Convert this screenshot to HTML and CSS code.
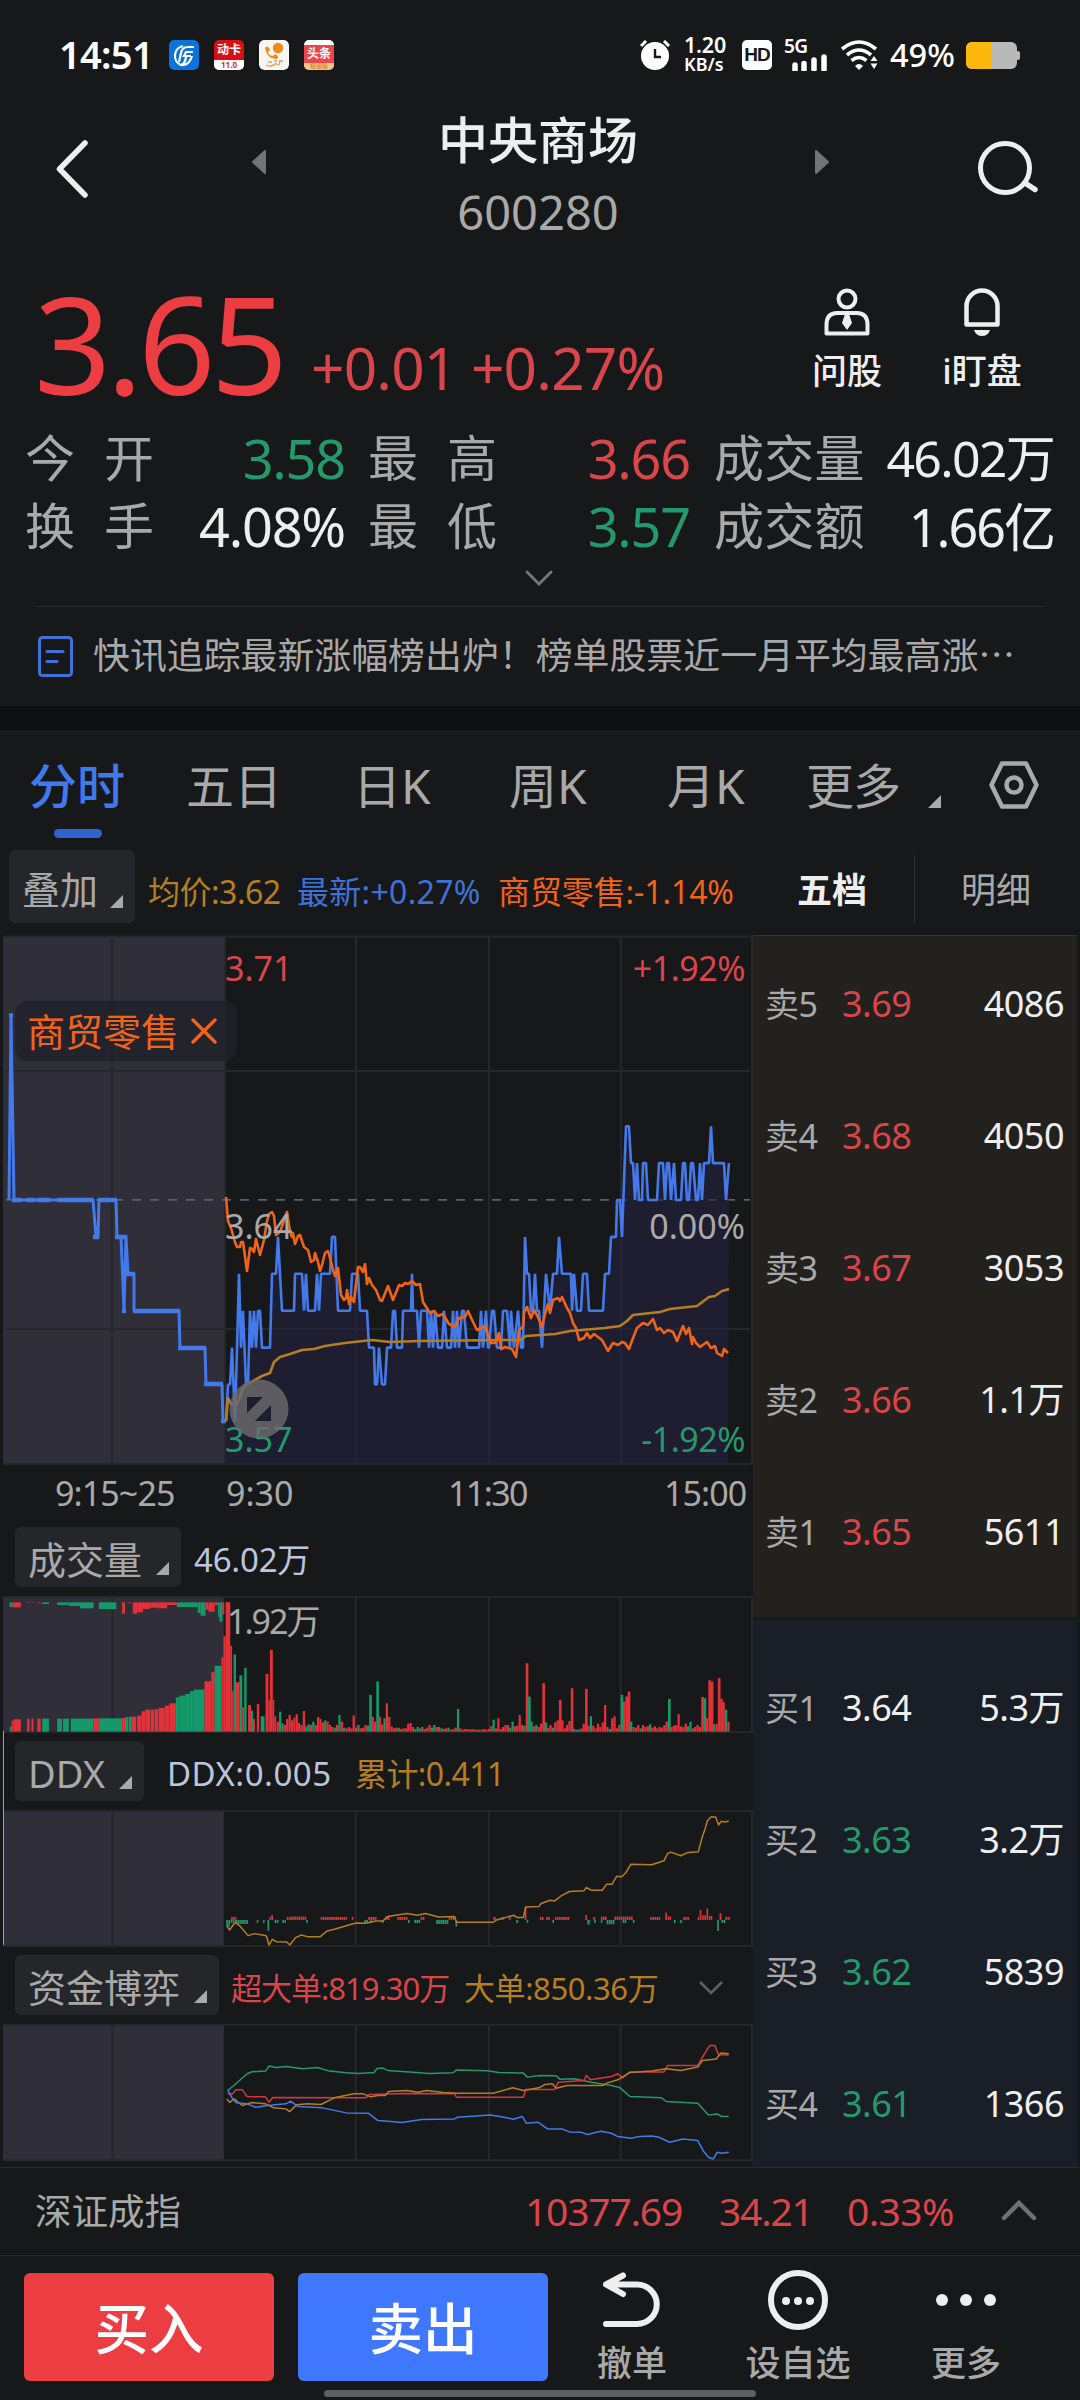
FILE: index.html
```html
<!DOCTYPE html>
<html lang="zh-CN">
<head>
<meta charset="utf-8">
<title>中央商场 600280</title>
<link rel="stylesheet" href="styles.css">
</head>
<body>
<div class="status">
  <span class="clock">14:51</span>
  <svg class="app" viewBox="0 0 30 30"><rect width="30" height="30" rx="5" fill="#0a74dc"/><path d="M14 6a10 10 0 0 0-2 19M25 7h-6q-6 0-7 6l-2 9M24 12h-7l-2 4h7M17 17q-1 7-5 8 8 1 11-9" fill="none" stroke="#fff" stroke-width="2.200"/></svg>
  <span class="app app-red"><b>动卡</b><i>11.0</i></span>
  <svg class="app" viewBox="0 0 30 30"><rect width="30" height="30" rx="5" fill="#f6f6f4"/><circle cx="19" cy="8" r="5.200" fill="#f08a1d"/><path d="M6 8q2-3 4 0l1 2-2 2q1 4 5 4l2-2 3 2q1 2-2 3-9 0-11-11z" fill="#f08a1d"/><path d="M7 25q5 3 9-1M9 22h4M15 21h3M20 21h4M21 21l-1 4M16 23l3 2" stroke="#e89a48" stroke-width="1.300" fill="none"/></svg>
  <span class="app app-news"><b>头条</b><i>极速版</i></span>
  <div class="status-right">
    <svg class="s-alarm" viewBox="0 0 30 30"><circle cx="15" cy="16" r="14" fill="#fff"/><path d="M1 6l5-5M29 6l-5-5" stroke="#fff" stroke-width="3"/><path d="M15 9v8h6" stroke="#171819" stroke-width="2.400" fill="none"/></svg>
    <div class="speed"><span>1.20</span><span>KB/s</span></div>
    <span class="hd">HD</span>
    <div class="signal"><span>5G</span><svg viewBox="0 0 36 17"><path d="M3 16v-5M12 16V9.500M22 15.500V6M32 15.500V3" stroke="#fff" stroke-width="5.500" stroke-linecap="round"/></svg></div>
    <svg class="s-wifi" viewBox="0 0 37 30"><g fill="none" stroke="#fff" stroke-width="3.600"><path d="M1 9q17-14 34 0"/><path d="M6 15q12-10 24 0"/><path d="M10.500 20.500q7.500-6 15 0"/></g><path d="M14 26q4-4 8 0l-4 4zM29.500 21l3.500-5 3.500 5zM29.500 23.500h7L33 29z" fill="#fff"/></svg>
    <span class="pct">49%</span>
    <svg class="s-bat" viewBox="0 0 54 27"><rect width="51" height="27" rx="6" fill="#b9b9b9"/><rect x="50" y="9" width="4" height="9" rx="2" fill="#b9b9b9"/><path d="M6 0h19.500v27H6a6 6 0 0 1-6-6V6a6 6 0 0 1 6-6z" fill="#fdb90b"/></svg>
  </div>
</div>

<header class="head">
  <svg class="back" viewBox="0 0 32 58"><path d="M29 3L3.500 29 29 55" fill="none" stroke="#eee" stroke-width="5.500" stroke-linecap="round" stroke-linejoin="round"/></svg>
  <svg class="prev" viewBox="0 0 14 24"><path d="M13 1v22L1 12z" fill="#737373" stroke="#737373" stroke-linejoin="round" stroke-width="2"/></svg>
  <div class="title"><h1>中央商场</h1><span>600280</span></div>
  <svg class="next" viewBox="0 0 14 24"><path d="M1 1v22l12-11z" fill="#737373" stroke="#737373" stroke-linejoin="round" stroke-width="2"/></svg>
  <svg class="search" viewBox="0 0 60 56"><circle cx="27" cy="28" r="24.500" fill="none" stroke="#eee" stroke-width="5"/><path d="M47 43l10 6.500" stroke="#eee" stroke-width="5.500" stroke-linecap="round"/></svg>
</header>

<section class="price">
  <span class="last">3.65</span>
  <span class="chg">+0.01 +0.27%</span>
  <div class="act act-ask"><svg width="46" height="48" viewBox="0 0 46 48"><g fill="none" stroke="#eee" stroke-width="4"><circle cx="23" cy="11" r="8.500"/><path d="M2.500 45.500V37Q2.500 25 13 25h20q10.500 0 10.500 12v8.500z" stroke-linejoin="round"/></g><path d="M21 26h4l3 9-5 7-5-7z" fill="#eee"/></svg><span>问股</span></div>
  <div class="act act-bell"><svg width="36" height="48" viewBox="0 0 36 48"><path d="M2.500 36.500V18a15.500 15.500 0 0 1 31 0v18.500z" fill="none" stroke="#eee" stroke-width="4.500" stroke-linejoin="round"/><path d="M10 42h16q-2 6-8 6t-8-6z" fill="#eee"/></svg><span>i盯盘</span></div>
</section>

<section class="quote">
  <span class="lab wide">今开</span><span class="val green">3.58</span><span class="lab wide">最高</span><span class="val red">3.66</span><span class="lab">成交量</span><span class="val small">46.02万</span>
  <span class="lab wide">换手</span><span class="val">4.08%</span><span class="lab wide">最低</span><span class="val green">3.57</span><span class="lab">成交额</span><span class="val mid">1.66亿</span>
</section>
<svg class="expand" viewBox="0 0 28 17"><path d="M2 2l12 12L26 2" fill="none" stroke="#777" stroke-width="2.800" stroke-linecap="round"/></svg>
<div class="news"><svg width="35" height="41" viewBox="0 0 35 41"><rect x="1.500" y="1.500" width="32" height="38" rx="3" fill="none" stroke="#4170d8" stroke-width="3"/><path d="M9 15.500h16M9 25.500h10" stroke="#4170d8" stroke-width="3" stroke-linecap="round"/></svg><span>快讯追踪最新涨幅榜出炉！榜单股票近一月平均最高涨⋯</span></div>

<nav class="tabs">
  <span class="on">分时</span><span>五日</span><span>日K</span><span>周K</span><span>月K</span><span>更多</span><i class="tri"></i>
  <svg class="gear" viewBox="0 0 50 48"><path d="M13 2.500h24L47.500 24 37 45.500H13L2.500 24z" fill="none" stroke="#a9a9a9" stroke-width="4.500" stroke-linejoin="round"/><circle cx="25" cy="24" r="7.500" fill="none" stroke="#a9a9a9" stroke-width="4.500"/></svg>
</nav>

<main class="main">
  <div class="left">
    <div class="legend"><span class="pill">叠加<i class="tri"></i></span><span class="gold l1">均价:3.62</span><span class="blue l2">最新:+0.27%</span><span class="orange l3">商贸零售:-1.14%</span></div>
    <div class="chart main-chart">
      <svg id="price" viewBox="0 935 753 530"></svg>
      <span class="mk tl red">3.71</span><span class="mk tr red">+1.92%</span>
      <span class="mk ml">3.64</span><span class="mk mr">0.00%</span>
      <span class="mk bl green">3.57</span><span class="mk br green">-1.92%</span>
      <div class="tag">商贸零售<svg width="26" height="26" viewBox="0 0 26 26"><path d="M2 2l22 22M24 2L2 24" stroke="#f0641a" stroke-width="3.400" stroke-linecap="round"/></svg></div>
      <svg class="zoom" viewBox="0 0 60 60"><circle cx="30" cy="30" r="29.500" fill="#6a6a6c" fill-opacity=".82"/><path d="M18 18h16L18 34zM42 26v16H26z" fill="#1d1d2d"/></svg>
    </div>
    <div class="axis"><span class="a1">9:15~25</span><span class="a2">9:30</span><span class="a3">11:30</span><span class="a4">15:00</span></div>
    <div class="bar"><span class="pill">成交量<i class="tri"></i></span><span class="pale v1">46.02万</span></div>
    <div class="chart sub"><svg id="volume" viewBox="0 377 1554 410" preserveAspectRatio="none"></svg><span class="mk vol">1.92万</span></div>
    <div class="focus">
      <div class="bar"><span class="pill">DDX<i class="tri"></i></span><span class="pale d1">DDX:0.005</span><span class="gold d2">累计:0.411</span></div>
      <div class="chart sub"><svg id="ddx" viewBox="0 28 1554 410" preserveAspectRatio="none"></svg></div>
    </div>
    <div class="bar"><span class="pill">资金博弈<i class="tri"></i></span><span class="red f1">超大单:819.30万</span><span class="gold f2">大单:850.36万</span><svg class="more" width="26" height="16" viewBox="0 0 26 16"><path d="M2 2l11 11L24 2" fill="none" stroke="#5d5f6d" stroke-width="2.600"/></svg></div>
    <div class="chart sub"><svg id="funds" viewBox="0 671 1554 410" preserveAspectRatio="none"></svg></div>
  </div>
  <aside class="book">
    <div class="book-tabs"><b>五档</b><span>明细</span></div>
    <div class="sell">
      <div><span>卖5</span><span class="red">3.69</span><span>4086</span></div>
      <div><span>卖4</span><span class="red">3.68</span><span>4050</span></div>
      <div><span>卖3</span><span class="red">3.67</span><span>3053</span></div>
      <div><span>卖2</span><span class="red">3.66</span><span>1.1万</span></div>
      <div><span>卖1</span><span class="red">3.65</span><span>5611</span></div>
    </div>
    <div class="buy">
      <div><span>买1</span><span class="white">3.64</span><span>5.3万</span></div>
      <div><span>买2</span><span class="green">3.63</span><span>3.2万</span></div>
      <div><span>买3</span><span class="green">3.62</span><span>5839</span></div>
      <div><span>买4</span><span class="green">3.61</span><span>1366</span></div>
    </div>
  </aside>
</main>

<div class="index"><span class="name">深证成指</span><span class="n1">10377.69</span><span class="n2">34.21</span><span class="n3">0.33%</span><svg width="36" height="21" viewBox="0 0 36 21"><path d="M3 18L18 3l15 15" fill="none" stroke="#707070" stroke-width="4.500" stroke-linecap="round"/></svg></div>

<footer class="foot">
  <span class="btn b-buy">买入</span><span class="btn b-sell">卖出</span>
  <div class="tool t1"><svg width="58" height="62" viewBox="0 0 58 62"><path d="M20 6.500L3 15.500l17 9.500M4 15.500h30a19.500 19.500 0 0 1 0 39.500H3" fill="none" stroke="#eee" stroke-width="6" stroke-linecap="round" stroke-linejoin="round"/></svg><span>撤单</span></div>
  <div class="tool t2"><svg width="60" height="62" viewBox="0 0 60 62"><circle cx="30" cy="31" r="27" fill="none" stroke="#eee" stroke-width="6"/><g fill="#eee"><circle cx="18" cy="32" r="4"/><circle cx="30" cy="32" r="4"/><circle cx="42" cy="32" r="4"/></g></svg><span>设自选</span></div>
  <div class="tool t3"><svg width="60" height="62" viewBox="0 0 60 62"><g fill="#eee"><circle cx="6" cy="31" r="6"/><circle cx="30" cy="31" r="6"/><circle cx="54" cy="31" r="6"/></g></svg><span>更多</span></div>
  <i class="home"></i>
</footer>
<script src="charts.js"></script>
</body>
</html>
```
FILE: styles.css
```css
* { box-sizing: border-box; }
body { margin: 0; width: 1080px; height: 2400px; overflow: hidden; background: #171819; color: #eee; font-family: "Noto Sans", "Noto Sans CJK SC", sans-serif; display: flex; flex-direction: column; line-height: 1; white-space: nowrap; }
svg { display: block; flex: none; }
i { font-style: normal; }
.red { color: #d8464b; }
.green { color: #24996c; }
.blue { color: #3f71d6; }
.gold { color: #b57e22; }
.orange { color: #f0641a; }
.pale { color: #bcc5dc; }
.white { color: #eee; }
.tri { width: 13px; height: 13px; background: #a9a9a9; clip-path: polygon(100% 0, 100% 100%, 0 100%); }

.status { height: 110px; padding: 0 60px 0 59px; display: flex; align-items: center; color: #fff; flex: none; }
.clock { font-size: 38px; font-weight: 600; letter-spacing: -.7px; width: 110px; line-height: 34px; margin-top: -2px; }
.app { width: 30px; height: 30px; margin-right: 15px; border-radius: 5px; overflow: hidden; flex: none; display: flex; flex-direction: column; align-items: center; }
.app b { font-size: 12px; line-height: 20px; color: #fff; }
.app i { font-size: 8px; line-height: 10px; width: 100%; text-align: center; }
.app-red { background: #d80f12; }
.app-red i { background: #fff; color: #d8302a; font-weight: 700; }
.app-news { background: linear-gradient(#fff 0 5px, #e8474d 5px); }
.app-news b { line-height: 24px; height: 23px; padding-top: 2px; }
.app-news i { background: #f4c58b; color: #d8702a; font-size: 6px; line-height: 7px; }
.status-right { margin-left: auto; display: flex; align-items: center; }
.s-alarm { width: 30px; height: 30px; margin-right: 14px; }
.speed { display: flex; flex-direction: column; width: 58px; font-weight: 600; font-size: 21.500px; line-height: 17px; letter-spacing: -.2px; margin-top: -2px; }
.speed span + span { font-size: 18px; letter-spacing: 0; margin-top: 3px; }
.hd { width: 30px; height: 30px; border-radius: 5px; background: #fff; color: #171819; font: 700 19px/30px "Liberation Sans", sans-serif; text-align: center; letter-spacing: -1px; margin-right: 12px; }
.signal { width: 45px; height: 32px; margin-right: 12px; display: flex; flex-direction: column; }
.signal span { font-size: 19px; line-height: 15px; font-weight: 600; letter-spacing: -.5px; }
.signal svg { width: 36px; height: 17px; margin-left: 8px; }
.s-wifi { width: 37px; height: 30px; margin-right: 12px; }
.pct { font-size: 32.500px; font-weight: 500; width: 76px; letter-spacing: 0; }
.s-bat { width: 54px; height: 27px; }

.head { height: 150px; display: grid; grid-template-columns: 56px 196px 178px 216px 169px 163px 102px; flex: none; }
.head > * { grid-row: 1; }
.back { grid-column: 2; width: 32px; height: 58px; margin-top: 30px; }
.prev { grid-column: 3; width: 14px; height: 24px; margin-top: 40px; }
.title { grid-column: 4; text-align: center; display: flex; flex-direction: column; align-items: center; padding-top: 4px; }
.title h1 { margin: 0; font-size: 50px; font-weight: 500; line-height: 52px; }
.title span { font-size: 47px; line-height: 50px; margin-top: 21px; color: #a9a9a9; }
.next { grid-column: 6; width: 14px; height: 24px; margin: 40px 0 0; }
.search { grid-column: 7; width: 60px; height: 56px; margin: 30px 0 0; }

.price { height: 166px; padding-left: 34px; display: flex; flex: none; }
.last { font-size: 135px; line-height: 136px; letter-spacing: -4.600px; width: 277px; margin-top: 15px; color: #eb3d42; }
.chg { font-size: 58.500px; line-height: 60px; letter-spacing: -.8px; margin-top: 77px; width: 481px; color: #d8464b; }
.act { display: flex; flex-direction: column; align-items: center; padding-top: 28px; font-size: 35px; width: 110px; }
.act span { margin-top: 17px; line-height: 36px; font-weight: 500; }
.act-bell { margin-left: 25px; }

.quote { height: 136px; padding-left: 25px; display: grid; grid-template-columns: 130px 190px 130px 215px 154px 210px; grid-auto-rows: 68px; column-gap: 0; flex: none; }
.quote > * { line-height: 65px; height: 68px; }
.lab { font-size: 50px; color: #a9a9a9; }
.lab.wide { letter-spacing: 29px; }
.lab:nth-child(6n+3) { margin-left: 23px; }
.lab:nth-child(6n+5) { margin-left: 24px; letter-spacing: .3px; }
.val { font-size: 54px; letter-spacing: -1.200px; text-align: right; }
.val:nth-child(6n) { justify-self: end; margin-right: -27px; width: 210px; }
.val:nth-child(12n+6), .val:nth-child(12n) { margin-right: 0; }
.val.small { font-size: 50px; letter-spacing: -1.700px; }
.val.mid { font-size: 52px; letter-spacing: -2px; }
.expand { width: 28px; height: 17px; margin: 8px auto 19px 525px; }
.news { height: 100px; margin: 0 35px; padding-left: 3px; border-top: 1px solid #2a2b2d; display: flex; align-items: center; gap: 20px; font-size: 36.900px; color: #a9a9a9; flex: none; }
.news span { margin-top: -3px; }

.tabs { height: 144px; border-top: 24px solid #0f1012; padding-left: 29px; display: flex; flex: none; font-size: 48px; color: #a9a9a9; line-height: 112px; }
.tabs > span { flex: none; }
.tabs .on { width: 157px; color: #4078ee; font-weight: 500; position: relative; }
.tabs .on::after { content: ""; position: absolute; left: 25px; top: 99px; width: 48px; height: 9px; border-radius: 5px; background: #2f63cf; }
.tabs span:nth-child(2) { width: 167px; }
.tabs span:nth-child(3) { width: 156px; }
.tabs span:nth-child(4) { width: 158px; }
.tabs span:nth-child(5) { width: 139px; }
.tabs span:nth-child(6) { width: 122px; letter-spacing: -1px; }
.tabs .tri { margin-top: 65px; }
.gear { width: 50px; height: 48px; margin: 31px 0 0 48px; }

.main { display: grid; grid-template-columns: 753px 324px; flex: none; height: 1317px; }
.left { display: flex; flex-direction: column; }
.legend { height: 85px; display: grid; grid-template-columns: 9px 139px 149px 201px 1fr; font-size: 32px; line-height: 74px; flex: none; }
.legend > span:not(.pill) { letter-spacing: -.5px; }
.pill { display: flex; align-items: flex-end; background: #25262a; border-radius: 6px; color: #a9a9a9; font-size: 38px; line-height: 58px; width: max-content; height: 60px; padding: 0 12px 0 13px; }
.pill .tri { margin: 0 0 12px 14px; }
.legend .pill { grid-column: 2; height: 73px; line-height: 67px; width: 126px; }
.legend .pill .tri { margin: 0 0 15px 12px; }
.legend .l1, .legend .l2, .legend .l3 { padding-top: 5px; }
.legend > span.l2 { letter-spacing: .3px; }
.legend > span.l3 { letter-spacing: -.1px; }
.chart { position: relative; flex: none; }
.main-chart { height: 530px; }
.main-chart > svg:first-child { width: 753px; height: 530px; }
.mk { position: absolute; font-size: 34px; line-height: 34px; letter-spacing: 0; }
.ml, .mr, .vol { color: #a9a9a9; }
.tl, .ml, .bl { left: 225px; }
.tr, .mr, .br { right: 8px; }
.tl, .tr { top: 16px; }
.ml, .mr { top: 274px; }
.bl, .br { top: 487px; }
.tr, .br { letter-spacing: -.5px; }
.tag { position: absolute; left: 15px; top: 66px; width: 222px; height: 60px; padding-left: 12px; display: flex; align-items: center; gap: 12px; background: #20212acc; border-radius: 12px; color: #f0641a; font-size: 38px; line-height: 54px; }
.zoom { position: absolute; left: 229px; top: 444px; width: 60px; height: 60px; }
.axis { height: 62px; display: grid; grid-template-columns: 55px 171px 222px 216px 1fr; font-size: 34px; line-height: 56px; color: #a9a9a9; flex: none; }
.a1 { grid-column: 2; letter-spacing: -.9px; }
.a3 { letter-spacing: -1.600px; }
.a4 { letter-spacing: -.9px; }
.bar { height: 69px; padding-left: 15px; display: flex; font-size: 33px; line-height: 66px; flex: none; }
.bar .pill { line-height: 56px; }
.sub { height: 137px; }
.sub > svg { width: 753px; height: 137px; }
.vol { left: 227px; top: 8px; letter-spacing: -2px; }
.v1 { margin-left: 13px; letter-spacing: -.2px; }
.d1 { margin-left: 23px; width: 188px; letter-spacing: .5px; }
.d2 { font-size: 32px; letter-spacing: -.6px; }
.f1 { margin-left: 12px; width: 233px; font-size: 31px; letter-spacing: -1px; }
.f2 { width: 234px; font-size: 31px; letter-spacing: -.4px; }
.more { margin-top: 25px; }
.focus { position: relative; height: 206px; margin: 8px 0; flex: none; }
.focus::before { content: ""; position: absolute; left: 3px; top: -10px; width: 1px; height: 214px; background: #9a9eb2; z-index: 1; }

.book { display: flex; flex-direction: column; }
.book-tabs { height: 86px; display: flex; font-size: 35px; flex: none; line-height: 80px; border-bottom: 1px solid #333436; }
.book-tabs b { width: 162px; padding-left: 44px; font-weight: 600; height: 68px; margin-top: 5px; border-right: 1px solid #333436; line-height: 70px; }
.book-tabs span { padding-left: 46px; color: #a9a9a9; }
.sell, .buy { font-size: 36px; }
.sell { height: 681px; background: #23211d; padding-top: 2px; margin-bottom: 3px; flex: none; }
.buy { height: 547px; background: #1a1e27; padding-top: 22px; flex: none; }
.sell div, .buy div { height: 132px; display: grid; grid-template-columns: 77px 100px 1fr; padding: 0 13px 0 12px; line-height: 132px; }
.sell span, .buy span { letter-spacing: -.5px; height: 132px; }
.sell span:first-child, .buy span:first-child { font-size: 34px; color: #a9a9a9; }
.sell span:last-child, .buy span:last-child { text-align: right; }

.index { height: 89px; border-top: 1px solid #2a2b2d; border-bottom: 1px solid #2a2b2d; padding-left: 35px; display: flex; align-items: center; color: #d8464b; font-size: 39px; line-height: 80px; flex: none; }
.index span { margin-top: -1px; letter-spacing: -1.200px; }
.index .name { width: 490px; font-size: 36.500px; letter-spacing: 0; color: #a9a9a9; }
.n1 { width: 194px; }
.n2 { width: 128px; }
.n3 { width: 154px; }
.index .n3 { letter-spacing: -.6px; }
.index svg { margin-top: -3px; }

.foot { height: 144px; padding: 17px 0 0 24px; display: flex; position: relative; flex: none; }
.btn { width: 250px; height: 108px; border-radius: 6px; margin-right: 24px; color: #fff; font-size: 54.500px; font-weight: 500; line-height: 110px; text-align: center; }
.b-buy { background: #eb3d42; }
.b-sell { background: #3f77ff; margin-right: 0; }
.tool { display: flex; flex-direction: column; align-items: center; width: 120px; font-size: 35px; line-height: 40px; color: #a9a9a9; margin-top: -4px; font-weight: 500; }
.tool span { margin-top: 12px; }
.t1 { margin-left: 24px; }
.t2 { margin-left: 46px; }
.t3 { margin-left: 48px; }
.home { position: absolute; left: 324px; top: 134px; width: 432px; height: 7px; border-radius: 4px; background: #5f5f61; }
```
FILE: charts.js
```js
const NS = 'http://www.w3.org/2000/svg';
const RED = '#e03238', GREEN = '#16996a', GOLD = '#b57e22';

function add(svg, tag, attrs) {
  const el = document.createElementNS(NS, tag);
  for (const k in attrs) el.setAttribute(k, attrs[k]);
  svg.appendChild(el);
  return el;
}
function line(svg, points, stroke, width, extra) {
  add(svg, 'polyline', Object.assign({ points, stroke, 'stroke-width': width, fill: 'none', 'vector-effect': 'non-scaling-stroke', 'stroke-linejoin': 'round' }, extra));
}

/* price chart: each tick level is 0.01 yuan, 36.9 units apart */
const price = document.getElementById('price');
const level = n => 1200 + 36.9 * n;
const toPoints = s => s.split(' ').map(p => { const [x, n] = p.split(':'); return x + ',' + level(+n); }).join(' ');

const pre = '9:0 11:-5 14:0 93:0 96:1 98:1 99:0 116:0 117:1 121:1 124:3 126:1 128:2 134:2 134:3 179:3 180:4 205:4 206:5 222:5 223:6 226:6';
const ticks = '226:6 228:5 230:5 232:4 235:6 239:2 241:4 243:3 246:5 248:5 250:3 252:4 254:3 256:4 258:3 260:3 262:4 270:4 272:2 276:2 278:1 282:3 294:3 295:2 302:2 304:3 306:2 308:3 315:3 317:2 319:3 321:2 330:2 332:1 335:1 338:3 350:3 352:2 358:2 360:3 367:3 369:4 374:4 375:5 377:5 379:4 382:5 385:5 387:4 391:4 393:3 395:3 397:4 402:4 403:3 411:3 412:2 413:3 417:3 419:4 421:3 427:3 429:4 431:3 433:4 435:3 438:4 442:4 444:3 447:4 451:4 453:3 455:4 457:3 459:4 462:3 464:3 467:4 479:4 481:3 483:4 486:3 488:4 489:4 492:3 494:3 497:4 501:4 503:3 507:3 510:4 511:3 514:4 518:3 521:4 523:4 525:1 527:2 529:2 531:3 533:3 535:2 537:3 539:3 542:4 546:2 550:3 553:2 557:2 559:1 562:2 571:2 572:3 574:2 577:3 581:3 583:2 587:2 589:3 603:3 605:2 609:2 611:1 616:1 617:0 620:0 622:1 626:-2 629:-2 631:-1 633:-1 635:0 637:-1 639:0 642:0 643:-1 646:-1 648:0 657:0 659:-1 663:-1 665:0 667:-1 669:-1 671:0 674:-1 676:0 681:0 683:-1 685:-1 687:0 689:0 691:-1 693:-1 696:0 698:0 700:-1 702:0 704:-1 709:-1 711:-2 713:-1 724:-1 726:0 729:-1';
const sector = '226,1197 228,1221 231,1228 235,1242 237,1247 240,1247 241,1242 243,1242 247,1271 250,1248 252,1249 254,1252 256,1239 260,1255 264,1240 267,1221 269,1214 272,1212 274,1216 276,1235 280,1232 287,1212 290,1232 292,1237 293,1233 295,1244 298,1236 300,1235 304,1247 308,1250 311,1262 314,1260 315,1253 318,1262 320,1271 322,1265 325,1253 328,1251 330,1258 333,1270 335,1276 338,1268 341,1295 344,1300 346,1298 347,1290 349,1304 351,1297 354,1302 358,1267 360,1267 363,1272 365,1264 367,1284 369,1278 372,1285 376,1290 380,1300 382,1301 388,1286 393,1300 399,1285 402,1286 405,1283 408,1284 412,1281 416,1285 420,1284 423,1302 430,1313 434,1311 438,1316 443,1314 449,1324 455,1327 459,1318 465,1317 468,1311 473,1322 477,1330 485,1326 491,1343 495,1343 499,1333 501,1349 505,1347 512,1349 516,1357 519,1330 523,1327 524,1313 527,1307 531,1318 534,1310 538,1317 542,1327 545,1314 548,1304 550,1313 553,1300 558,1298 560,1301 562,1297 567,1308 570,1313 573,1323 576,1328 579,1340 584,1338 587,1333 590,1338 594,1334 602,1340 608,1351 613,1343 618,1345 622,1342 625,1343 629,1349 633,1338 637,1328 643,1323 648,1325 653,1319 657,1330 660,1328 664,1333 668,1330 673,1332 677,1341 683,1326 686,1334 689,1328 692,1344 693,1337 696,1343 700,1347 707,1342 711,1348 715,1346 717,1353 722,1356 724,1349 728,1353';
const average = '226,1421 228,1398 231,1404 236,1405 239,1400 243,1388 246,1385 262,1376 270,1373 274,1362 280,1357 290,1354 302,1350 314,1349 325,1346 345,1343 372,1340 390,1342 420,1341 500,1340 520,1340 526,1336 555,1334 570,1331 605,1328 620,1326 627,1321 633,1315 660,1312 670,1309 697,1306 709,1297 715,1296 722,1291 729,1289';

add(price, 'rect', { x: 3, y: 936, width: 222, height: 528, fill: '#2f2e39' });
add(price, 'path', { d: 'M3 936.500H751M3 1464H751M6 1071H750M6 1329H750M112 936V1464M225 936V1464M356 936V1464M489 936V1464M621 936V1464M752 936V1464', stroke: '#26272a', 'stroke-width': 2, fill: 'none' });
add(price, 'path', { d: 'M6 1199.800H750', stroke: '#5b606b', 'stroke-width': 1.8, 'stroke-dasharray': '9 9' });
add(price, 'polygon', { points: toPoints(ticks) + ' 728,1463 226,1463', fill: '#23223f', 'fill-opacity': .62 });
line(price, toPoints(pre), '#4479ea', 3);
add(price, 'path', { d: 'M9 1015.500h4M12 1200h10M26 1200h9M37 1200h13M57 1200h36M98 1200h19M93 1237h6M115 1237h12M122 1311h4M126 1274h9M133 1311h47M178 1348h28M204 1384h19M221 1421h5', stroke: '#4479ea', 'stroke-width': 4.5 });
line(price, toPoints(ticks), '#4479ea', 2.6, { 'stroke-linejoin': 'bevel' });
line(price, average, GOLD, 2.6);
line(price, sector, '#f0641a', 2.6);

/* shared frame of the indicator charts */
function frame(svg, top) {
  add(svg, 'rect', { x: 6, y: top, width: 456, height: 410, fill: '#2f2e39' });
  add(svg, 'path', { d: `M6 ${top + 2}H1552M6 ${top + 408}H1552M232 ${top}v410M734 ${top}v410M1009 ${top}v410M1281 ${top}v410M1552 ${top}v410`, stroke: '#26272a', 'stroke-width': 2, fill: 'none', 'vector-effect': 'non-scaling-stroke' });
}

/* volume */
const volume = document.getElementById('volume');
frame(volume, 377);
const vbar = (x0, x1, y0, y1, c) => add(volume, 'rect', { x: x0, y: y0, width: x1 - x0, height: y1 - y0, fill: c === 'r' ? RED : GREEN });
'20 24 768 g,24 28 750 r,28 43 746 r,56 61 744 r,65 69 744 r,77 84 744 r,87 101 744 g,118 128 744 g,130 142 744 g,146 193 744 g,193 204 743 r,204 252 743 g,252 258 742 r,258 265 740 g,266 272 738 g,272 281 738 r,283 292 735 r,292 300 722 r,300 310 717 r,311 318 717 r,319 326 716 r,327 340 712 r,340 350 705 r,350 363 698 r,363 370 680 g,370 382 675 g,382 392 670 g,392 400 662 g,400 422 657 g,422 436 632 r,436 443 605 r,443 457 586 g,457 461 560 r,461 466 497 r,466 475 396 r,475 479 526 r,479 482 660 r,482 487 552 g,487 494 635 r,494 500 615 g,500 504 710 r,504 509 592 g,512 518 703 r,518 522 720 g,522 526 745 r,530 535 700 r,538 546 737 g,548 554 610 r,554 557 688 r,557 563 538 r,563 566 687 r,566 570 737 r'.split(',').forEach(b => { const [a, z, t, c] = b.split(' '); vbar(+a, +z, +t, 783, c); });
'20 26 410 g,26 43 411 r,56 61 398 r,65 69 398 r,77 84 398 r,87 101 401 g,118 142 404 g,142 165 407 g,165 193 414 g,204 240 416 g,252 258 430 r,263 270 398 r,274 283 430 r,283 295 426 r,295 310 416 r,310 326 412 r,326 345 414 r,345 365 404 r,365 408 410 g,408 414 428 g,414 424 436 g,424 430 418 r,430 443 424 r,443 450 405 r,450 453 440 g,453 459 454 g,459 463 432 r,466 475 500 r'.split(',').forEach(b => { const [a, z, t, c] = b.split(' '); vbar(+a, +z, 396, +t, c); });
/* one bar per minute: its height, g = falling */
const minutes = '30r 60g 25g 20r 38r 50r 34r 42r 52r 26r 20r 62r 16g 22g 20r 30g 20r 44r 38r 28r 34g 30r 20r 14r 12g 20r 50g 30r 12g 10r 14r 10r 48r 12r 20g 10r 12r 20r 18g 110g 44r 30r 150g 45r 22r 40g 85r 44r 16r 10r 12r 12g 8r 10r 10r 24r 26r 14r 8g 14g 10r 14g 8r 12r 20r 12g 20g 14r 14r 10g 8r 10r 12g 6r 8r 12r 68g 10r 6r 8r 8r 6r 8r 6g 6r 6r 6r 8r 6r 8r 16r 36g 10r 40r 8r 14r 20r 20r 12g 30g 16r 18r 50r 20r 18g 205r 105g 30g 16r 20g 14r 24r 145r 28g 12r 20r 12g 28r 34r 95r 34r 10r 20r 32r 130r 8g 6g 6g 10r 24r 128r 18r 46g 18r 10r 24r 14r 28r 80r 14r 8g 40r 46r 10r 20r 110g 90r 105r 120r 30g 14r 12r 20r 10g 20r 14r 16r 22g 12r 16r 10r 14r 12r 20r 30r 98g 14r 18r 20r 52r 16r 14r 24r 16g 30g 10r 14r 20r 14r 104r 100g 40r 154r 150r 22g 24r 160r 98r 88r 66g 30r';
minutes.split(' ').forEach((m, i, all) => {
  const x = 571 + i * (930 / (all.length - 1));
  const h = parseInt(m, 10);
  vbar(x, x + (h > 90 ? 5.5 : 4.6), 783 - h, 783, m.slice(-1));
});

/* DDX */
const ddx = document.getElementById('ddx');
frame(ddx, 28);
const dbars = (list, color, up) => list.split(' ').forEach(s => {
  const [a, z, h = 9] = s.split('-').map(Number);
  for (let x = a; x < z; x += 4.3) add(ddx, 'rect', { x, y: up ? 357 - h : 357, width: Math.min(3.4, z - x), height: h, fill: color });
});
dbars('477-488 556-559 560-564-15 592-598 599-632-10 662-716 726-729 760-778 795-805-10 820-842 868-877 926-940-11 1018-1024 1035-1040 1050-1055 1083-1087-39 1114-1122 1127-1135 1145-1176 1208-1212-15 1224-1229 1240-1252-10 1268-1306-10 1342-1363 1373-1377-22 1378-1385-11 1410-1423 1440-1443 1444-1448-30 1449-1457-14 1458-1462-34 1463-1470-12 1485-1490-20 1497-1507', '#d8363c', true);
dbars('467-475-20 476-487 487-512-12 530-533 543-546 552-556-32 567-575 583-590 632-636 752-760 764-767 788-792 842-846 855-868 900-926-12 940-944-20 1065-1070 1087-1090 1140-1144 1212-1218-14 1226-1230 1240-1243 1252-1268-13 1285-1293 1306-1310 1391-1395 1403-1408 1480-1484-33 1489-1497', '#1f9c6c', false);
line(ddx, '468,375 474,387 482,370 487,365 497,378 512,404 525,398 545,403 550,405 555,432 562,415 570,422 592,423 598,432 610,410 622,402 634,407 661,407 675,390 690,385 725,370 735,366 755,367 775,360 790,360 800,347 840,338 862,343 878,338 905,348 938,347 942,364 1017,364 1025,357 1060,343 1068,350 1080,350 1085,318 1112,317 1117,308 1135,298 1145,300 1157,286 1175,272 1205,270 1210,260 1220,268 1243,268 1252,250 1263,250 1273,226 1283,228 1292,215 1302,190 1345,192 1370,180 1378,158 1385,154 1405,165 1420,155 1441,153 1448,115 1455,85 1460,60 1467,49 1477,49 1483,73 1488,62 1496,64 1504,61', GOLD, 1.5);

/* money flow */
const funds = document.getElementById('funds');
frame(funds, 671);
line(funds, '470,870 485,852 510,820 520,814 548,812 555,797 570,801 590,798 625,805 655,801 680,812 715,817 740,819 772,816 778,804 790,803 800,810 860,816 885,819 935,817 942,809 1005,811 1030,816 1080,818 1088,830 1115,825 1148,826 1155,836 1185,835 1220,845 1262,855 1280,862 1300,888 1365,892 1375,903 1440,908 1462,943 1480,940 1490,948 1504,948', '#24996c', 1.5);
line(funds, '470,880 480,880 487,868 500,868 510,888 548,889 555,905 563,891 755,892 762,882 835,879 938,880 942,890 1080,890 1085,867 1145,867 1152,845 1205,840 1210,825 1218,838 1262,828 1275,820 1285,832 1300,815 1370,815 1378,795 1440,795 1452,765 1465,735 1475,735 1483,763 1504,764', '#d0393f', 1.5);
line(funds, '468,895 474,906 483,895 500,915 520,906 548,910 565,922 590,925 598,933 612,913 635,910 662,912 690,892 730,880 750,880 765,889 780,885 795,885 802,873 840,870 862,875 880,870 915,876 945,878 1018,878 1058,862 1080,870 1112,862 1125,852 1140,850 1148,863 1170,855 1245,855 1252,848 1275,838 1300,816 1345,812 1375,805 1405,810 1440,800 1450,780 1478,776 1488,758 1504,760', GOLD, 1.5);
line(funds, '470,868 480,895 488,907 510,910 528,920 552,915 590,910 600,902 615,918 665,922 715,937 760,938 780,960 800,962 830,966 870,957 938,955 944,950 1012,943 1040,950 1060,956 1078,948 1086,968 1110,965 1130,985 1160,985 1175,994 1200,995 1212,1002 1240,992 1262,998 1275,1008 1302,1013 1320,1008 1345,1006 1360,1010 1382,1025 1410,1015 1440,1020 1452,1052 1462,1070 1472,1075 1480,1055 1490,1058 1504,1055', '#4479ea', 1.5);
```
